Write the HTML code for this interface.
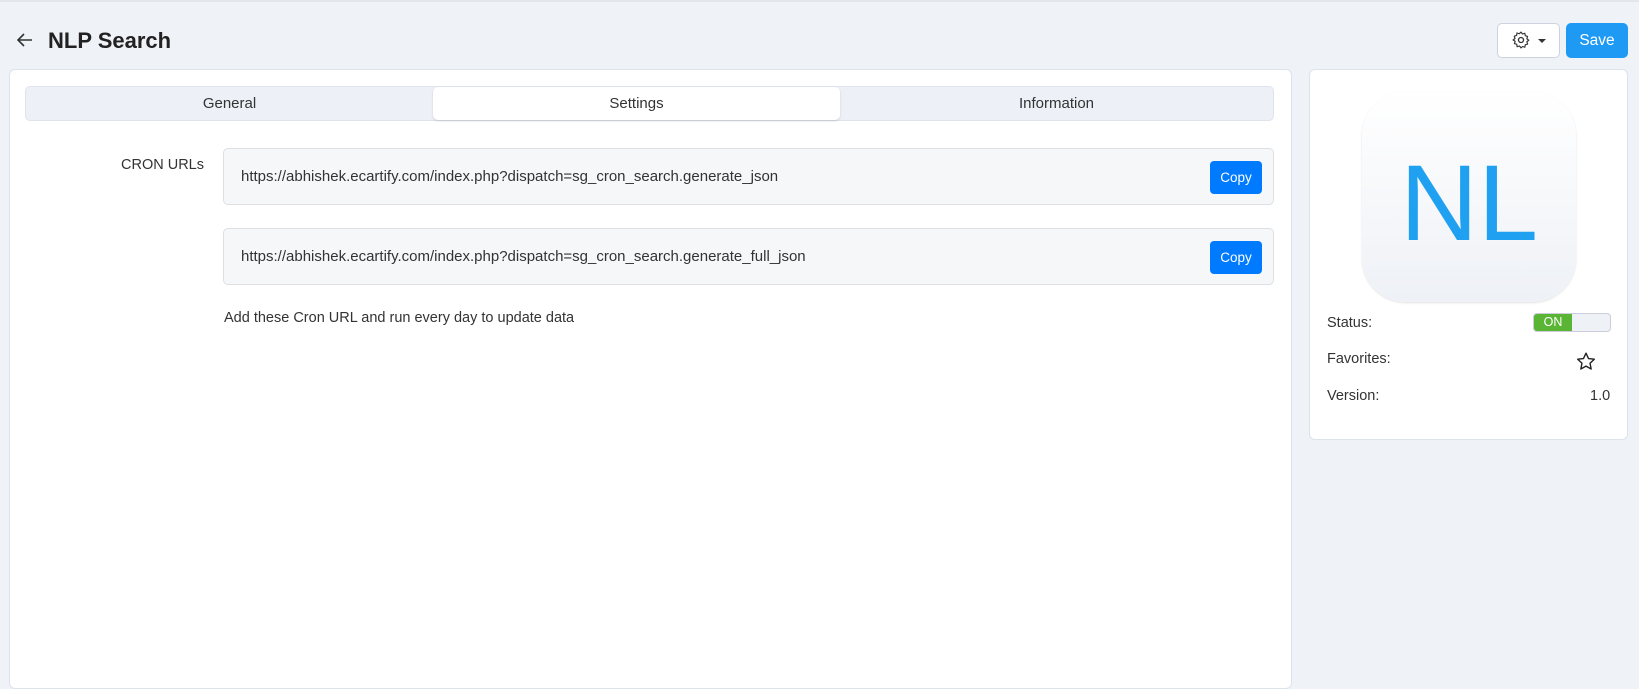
<!DOCTYPE html>
<html><head><style>
*{box-sizing:border-box;margin:0;padding:0}
body{width:1639px;height:661px;background:#eff2f7;font-family:"Liberation Sans",sans-serif;color:#333;position:relative;overflow:hidden}
.abs{position:absolute}
.topline{left:0;top:0;width:1639px;height:2px;background:#e3e6ec}
h1{position:absolute;left:48px;top:28px;font-size:22px;font-weight:bold;color:#222}
.card{background:#fff;border:1px solid #dde3ec;border-radius:6px}
.tabs{left:25px;top:86px;width:1249px;height:35px;background:#edf1f7;border:1px solid #dfe4ec;border-radius:5px;display:flex;font-size:15px}
.tabs div{text-align:center;line-height:34px;color:#333}
.tabs .act{background:#fff;border-radius:5px;box-shadow:0 1px 2px rgba(0,0,0,.15)}
.url{left:223px;width:1051px;height:57px;background:#f6f7f9;border:1px solid #dcdfe4;border-radius:5px;font-size:15px;color:#333;padding-left:17px;line-height:56px}
.copy{position:absolute;right:11px;top:12px;width:52px;height:33px;background:#007bff;color:#fff;border-radius:4px;font-size:13.5px;text-align:center;line-height:33px}
.lbl{font-size:14.5px;color:#333}
</style></head><body>
<div class="abs topline"></div>
<svg class="abs" style="left:15px;top:31px" width="20" height="18" viewBox="0 0 20 18"><path d="M17 9H3M9 3L3 9l6 6" stroke="#333" stroke-width="1.6" fill="none"/></svg>
<h1>NLP Search</h1>
<div class="abs" style="left:1497px;top:23px;width:63px;height:35px;background:#fff;border:1px solid #ccd3df;border-radius:5px"></div>
<svg class="abs" style="left:1511px;top:30px" width="20" height="20" viewBox="0 0 24 24"><circle cx="12" cy="12" r="3" fill="none" stroke="#333" stroke-width="1.6"/><path d="M12 2.5l1.8 2.3 2.8-.9.5 2.9 2.8.9-.9 2.8 2.3 1.8-2.3 1.8.9 2.8-2.8.9-.5 2.9-2.8-.9L12 21.5l-1.8-2.3-2.8.9-.5-2.9-2.8-.9.9-2.8L2.5 12l2.3-1.8-.9-2.8 2.8-.9.5-2.9 2.8.9z" fill="none" stroke="#333" stroke-width="1.4" stroke-linejoin="round"/></svg>
<div class="abs" style="left:1538px;top:39px;border:4px solid transparent;border-top:4px solid #333;border-bottom:0"></div>
<div class="abs" style="left:1566px;top:23px;width:62px;height:35px;background:#1e9af5;border-radius:5px;color:#fff;font-size:15.5px;text-align:center;line-height:35px">Save</div>

<div class="abs card" style="left:9px;top:69px;width:1283px;height:620px"></div>
<div class="abs tabs"><div style="width:407px">General</div><div class="act" style="width:407px">Settings</div><div style="flex:1">Information</div></div>
<div class="abs lbl" style="left:121px;top:157px">CRON URLs</div>
<div class="abs url" style="top:148px">https://abhishek.ecartify.com/index.php?dispatch=sg_cron_search.generate_json<div class="copy">Copy</div></div>
<div class="abs url" style="top:228px">https://abhishek.ecartify.com/index.php?dispatch=sg_cron_search.generate_full_json<div class="copy">Copy</div></div>
<div class="abs lbl" style="left:224px;top:310px">Add these Cron URL and run every day to update data</div>

<div class="abs card" style="left:1309px;top:69px;width:319px;height:371px"></div>
<div class="abs" style="left:1362px;top:92px;width:214px;height:210px;border-radius:44px;background:linear-gradient(#fff,#eef1f6);box-shadow:0 1px 2px rgba(0,0,0,.12);color:#1fa0f0;font-size:108px;text-align:center;line-height:222px">NL</div>
<div class="abs lbl" style="left:1327px;top:315px">Status:</div>
<div class="abs" style="left:1533px;top:313px;width:78px;height:19px;border:1px solid #ccd;border-radius:4px;background:#eef1f6;overflow:hidden"><div style="width:38px;height:100%;background:#5ab535;color:#fff;font-size:12.5px;text-align:center;line-height:17px">ON</div></div>
<div class="abs lbl" style="left:1327px;top:351px">Favorites:</div>
<svg class="abs" style="left:1575px;top:351px" width="22" height="21" viewBox="0 0 24 24"><path d="M12 2.5l2.9 6.1 6.6.8-4.9 4.6 1.3 6.6L12 17.3l-5.9 3.3 1.3-6.6-4.9-4.6 6.6-.8z" fill="none" stroke="#222" stroke-width="1.6" stroke-linejoin="round"/></svg>
<div class="abs lbl" style="left:1327px;top:388px">Version:</div>
<div class="abs lbl" style="left:1590px;top:388px">1.0</div>
</body></html>
